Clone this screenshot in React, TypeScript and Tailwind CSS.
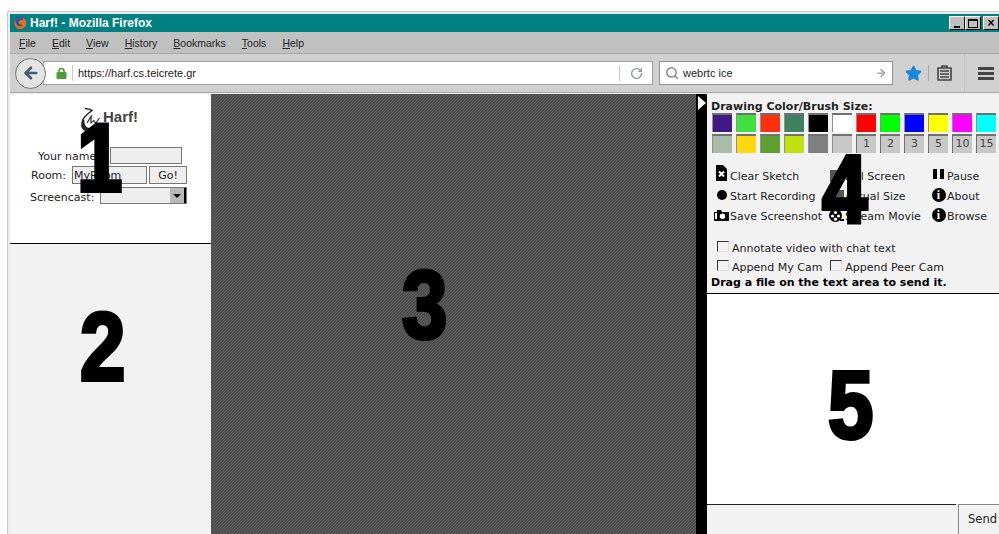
import { ArrowLeft, ArrowRight, RotateCw, Search, Star } from "lucide-react";

const DEJAVU = "font-['DejaVu_Sans',sans-serif]";

const MENU = ["File", "Edit", "View", "History", "Bookmarks", "Tools", "Help"];

const ROW_ONE = ["#3f1a85", "#40e040", "#ff3010", "#3f8060", "#000000", "#ffffff", "#ff0000", "#00ff00", "#0000ff", "#ffff00", "#ff00ff", "#00ffff"];
const ROW_TWO = ["#a8bca8", "#ffd810", "#60a030", "#c0e010", "#808080", "#c8c8c8"];
const BRUSHES = ["1", "2", "3", "5", "10", "15"];

function WinButton({ children }: { children: React.ReactNode }) {
  return (
    <div className="flex h-[14px] w-[16px] items-end justify-center border border-t-white border-l-white border-r-black border-b-black bg-[#c0c0c0]">
      {children}
    </div>
  );
}

function Swatch({ color }: { color: string }) {
  return (
    <div
      className="h-[19px] w-[20px] border-t-2 border-l border-t-[#707070] border-l-[#909090]"
      style={{ backgroundColor: color }}
    />
  );
}

function FoxLogo() {
  return (
    <svg width="14" height="14" viewBox="0 0 14 14">
      <circle cx="7" cy="7" r="6.5" fill="#2a5a9c" />
      <path d="M2 3C1 6 1 10 4 12.5 8 14.5 12.5 12 13.5 8 13.5 5 12 2.5 9.5 1.5 10.5 3 10 4 9 4.5 7 3.5 5 5 5.5 7 7 9 10 8 9.5 9.5 7 11.5 3 10 2.5 6Z" fill="#e8701a" />
    </svg>
  );
}

function HarfLogo() {
  return (
    <svg width="22" height="25" viewBox="0 0 22 25">
      <path d="M5 1.5c3 .2 5 .8 7 2-4 3-8 6-9.500 10" fill="none" stroke="#222" strokeWidth="1.500" />
      <path d="M2.500 12C.5 16 .5 21 4 23.500c5 2 11-.5 14.500-5-4 3-8 3.500-11 2C5 19 4 16 4.500 13Z" fill="#222" />
      <path d="M7 16c1.500-2 3-6 4.500-7-.5 3-1 5.500-.5 7 1-1 2-2.500 3-2.500 0 2 1 2.500 2.500 1.500l3-4" fill="none" stroke="#333" strokeWidth="1.200" />
    </svg>
  );
}

function ToolLabel({ icon, children }: { icon: React.ReactNode; children: string }) {
  return (
    <div className="flex h-[20px] items-center">
      <div className="flex w-[17px] shrink-0 justify-center">{icon}</div>
      <span className="whitespace-nowrap">{children}</span>
    </div>
  );
}

function InfoDot() {
  return (
    <div className="-mt-[5px] flex size-[14px] items-center justify-center rounded-full bg-black font-['Liberation_Serif',serif] text-[12px] leading-none font-bold text-white">
      i
    </div>
  );
}

function SketchIcon() {
  return (
    <svg width="11" height="16" viewBox="0 0 11 16" className="-mt-[8px]">
      <path d="M0 0h7l4 4v12H0Z" fill="#000" />
      <path d="M3 6.500l5 5M8 6.500l-5 5" stroke="#fff" strokeWidth="2" />
    </svg>
  );
}

function CameraIcon() {
  return (
    <svg width="15" height="11" viewBox="0 0 15 11" className="-mt-[3px]">
      <path d="M0 2h3V0h4l1 2h7v9H0Z" fill="#000" />
      <circle cx="8.500" cy="6.200" r="2.700" fill="#fff" />
      <rect x="1" y="3" width="2" height="6" fill="#fff" />
    </svg>
  );
}

function ReelIcon() {
  return (
    <svg width="15" height="14" viewBox="0 0 15 14" className="-mt-[3px]">
      <circle cx="6.500" cy="6.500" r="6.500" fill="#000" />
      <circle cx="6.500" cy="3.500" r="1.600" fill="#fff" />
      <circle cx="3.500" cy="7" r="1.600" fill="#fff" />
      <circle cx="9.500" cy="7" r="1.600" fill="#fff" />
      <circle cx="6.500" cy="10.200" r="1.600" fill="#fff" />
      <rect x="11" y="10" width="4" height="2" fill="#000" />
    </svg>
  );
}

function CheckLabel({ children }: { children: string }) {
  return (
    <label className="flex items-center gap-[3px] whitespace-nowrap">
      <span className="-mt-[6px] h-[11px] w-[12px] border border-t-[#333] border-l-[#333] border-r-[#ddd] border-b-[#ddd] bg-[#f2f2f2]" />
      <span>{children}</span>
    </label>
  );
}

function BigNumber({ className, children }: { className: string; children: string }) {
  return (
    <div className={`absolute scale-x-[0.85] font-['Liberation_Sans',sans-serif] text-[96px] leading-none font-bold text-black [-webkit-text-stroke:4px_black] ${className}`}>
      {children}
    </div>
  );
}

export default function App() {
  return (
    <div className="relative h-[534px] w-[999px] overflow-hidden bg-white pt-[11px] pl-[7px] font-['Liberation_Sans',sans-serif]">
      <div className="flex h-[523px] flex-col border-t border-l border-[#c8c8c8] bg-[#ececec] pt-[2px] pl-[2px]">
        {/* Window title bar */}
        <div className="flex h-[18px] shrink-0 items-center justify-between bg-[#008080] pl-[3px]">
          <div className="flex items-center gap-[3px] text-[12px] font-bold text-white">
            <FoxLogo />
            <span>Harf! - Mozilla Firefox</span>
          </div>
          <div className="flex items-center">
            <WinButton>
              <div className="mb-[1px] h-[2px] w-[6px] bg-black" />
            </WinButton>
            <WinButton>
              <div className="mb-[1px] h-[9px] w-[10px] border border-t-2 border-black" />
            </WinButton>
            <div className="ml-[2px]">
              <WinButton>
                <div className="text-[12px] leading-[12px] font-bold text-black">×</div>
              </WinButton>
            </div>
          </div>
        </div>

        {/* Menu bar */}
        <div className="flex h-[21px] shrink-0 items-center gap-[16px] bg-[#c0c0c0] pt-[2px] pl-[9px] text-[10.5px] text-[#222]">
          {MENU.map((item) => (
            <span key={item}>
              <span className="underline">{item[0]}</span>
              {item.slice(1)}
            </span>
          ))}
        </div>

        {/* Navigation bar */}
        <div className="flex h-[40px] shrink-0 items-center border-y border-y-[#a8a8a8] bg-[#d0d0d0] pl-[5px] text-[11px]">
          <div className="z-10 flex size-[31px] items-center justify-center rounded-full border border-[#777] bg-[#e4e4e4]">
            <ArrowLeft size={18} strokeWidth={3.5} className="text-[#4a5a72]" />
          </div>
          <div className="-ml-[3px] flex h-[24px] w-[610px] items-center border border-[#a0a0a0] bg-white">
            <svg width="11" height="12" viewBox="0 0 11 12" className="ml-[12px]">
              <path d="M3 6V4a2.500 2.500 0 0 1 5 0v2" fill="none" stroke="#48a038" strokeWidth="1.600" />
              <rect x="0.500" y="5" width="10" height="7" rx="1" fill="#48a038" />
            </svg>
            <div className="ml-[5px] h-[16px] w-px bg-[#ccc]" />
            <span className="ml-[5px] flex-1 text-[#222]">https://harf.cs.teicrete.gr</span>
            <div className="flex h-[16px] w-[33px] items-center justify-center border-l border-l-[#ccc]">
              <RotateCw size={13} strokeWidth={2.5} className="text-[#8a98a8]" />
            </div>
          </div>
          <div className="ml-[6px] flex h-[24px] w-[234px] items-center border border-[#909090] bg-white">
            <Search size={14} strokeWidth={2.5} className="ml-[5px] text-[#888]" />
            <span className="ml-[4px] flex-1 text-[#222]">webrtc ice</span>
            <ArrowRight size={12} strokeWidth={2.5} className="mr-[5px] text-[#999]" />
          </div>
          <Star size={17} className="ml-[12px] fill-[#1a88d8] text-[#1a88d8]" />
          <div className="ml-[6px] h-[16px] w-px bg-[#aaa]" />
          <svg width="15" height="16" viewBox="0 0 15 16" className="ml-[8px]">
            <path d="M1 3h13v12H1ZM5 3V1h5v2" fill="none" stroke="#444" strokeWidth="1.600" />
            <path d="M3 6h9M3 9h9M3 12h9" stroke="#444" strokeWidth="1.400" />
          </svg>
          <div className="ml-[12px] h-[38px] w-px bg-[#c0c0c0]" />
          <div className="ml-[13px] flex w-[16px] flex-col gap-[2px]">
            <div className="h-[3px] bg-[#444]" />
            <div className="h-[3px] bg-[#444]" />
            <div className="h-[3px] bg-[#444]" />
          </div>
        </div>

        {/* Page content */}
        <div className={`mt-[1px] flex min-h-0 flex-1 ${DEJAVU} text-[11px] text-[#222]`}>
          <div className="flex w-[201px] shrink-0 flex-col bg-[#f2f2f2]">
            <div className="flex h-[150px] flex-col border-b border-b-black bg-white">
              <div className="mt-[13px] ml-[70px] flex h-[25px] items-start">
                <HarfLogo />
                <span className="mt-[1px] ml-[1px] font-['Liberation_Sans',sans-serif] text-[15px] leading-[18px] font-bold text-[#444]">Harf!</span>
              </div>
              <div className="mt-[15px] flex h-[17px] items-center pl-[28px]">
                <span className="w-[72px] pt-[3px]">Your name:</span>
                <div className="h-[17px] w-[72px] border border-[#777] bg-[#eeeeee]" />
              </div>
              <div className="mt-[2px] flex h-[18px] items-center pl-[21px]">
                <span className="w-[41px] pt-[3px]">Room:</span>
                <div className="flex h-[18px] w-[75px] items-center border border-[#777] bg-[#eeeeee] pt-[2px] pl-[1px]">MyRoom</div>
                <div className="ml-[2px] flex h-[18px] w-[38px] items-center justify-center border border-[#777] bg-[#eeeeee] pt-[2px]">Go!</div>
              </div>
              <div className="mt-[3px] flex h-[17px] items-center pl-[20px]">
                <span className="w-[70px] pt-[5px]">Screencast:</span>
                <div className="flex h-[17px] w-[87px] justify-end border border-[#777] bg-[#eeeeee]">
                  <div className="flex w-[16px] items-center justify-center border-r-2 border-r-black bg-[#b8b8b8]">
                    <div className="size-0 border-x-[4px] border-t-[4px] border-x-transparent border-t-black" />
                  </div>
                </div>
              </div>
            </div>
          </div>

          <div className="w-[485px] shrink-0 bg-[repeating-linear-gradient(135deg,#4c4c4c_0,#4c4c4c_1.06px,#606060_1.06px,#606060_2.121px)]" />

          <div className="w-[11px] shrink-0 bg-black pt-[2px] pl-[2px]">
            <div className="h-0 w-0 border-y-[7px] border-l-[8px] border-y-transparent border-l-white" />
          </div>

          <div className="flex min-w-0 flex-1 flex-col bg-[#f2f2f2]">
            {/* Drawing tools */}
            <div className="h-[200px] shrink-0 border-b border-b-black pl-[5px]">
              <div className="mt-[6px] -ml-px leading-[13px] font-bold whitespace-nowrap">Drawing Color/Brush Size:</div>
              <div className="flex gap-[4px]">
                {ROW_ONE.map((c) => (
                  <Swatch key={c} color={c} />
                ))}
              </div>
              <div className="mt-[2px] flex gap-[4px]">
                {ROW_TWO.map((c) => (
                  <Swatch key={c} color={c} />
                ))}
                {BRUSHES.map((b) => (
                  <div key={b} className="flex h-[19px] w-[20px] items-center justify-center border-t-2 border-l border-t-[#707070] border-l-[#707070] bg-[#c8c8c8] text-[#444]">
                    {b}
                  </div>
                ))}
              </div>

              <div className="mt-[14px] grid grid-cols-[115px_102px_1fr] pl-[1px]">
                <ToolLabel icon={<SketchIcon />}>Clear Sketch</ToolLabel>
                <ToolLabel icon={<div className="-mt-[3px] h-[12px] w-[14px] bg-[#555]" />}>Full Screen</ToolLabel>
                <ToolLabel icon={<div className="-mt-[7px] flex gap-[3px]"><div className="h-[10px] w-[4px] bg-black" /><div className="h-[10px] w-[4px] bg-black" /></div>}>Pause</ToolLabel>
                <ToolLabel icon={<div className="-mt-[5px] size-[10px] rounded-full bg-black" />}>Start Recording</ToolLabel>
                <ToolLabel icon={<div className="-mt-[3px] h-[12px] w-[14px] bg-[#555]" />}>Actual Size</ToolLabel>
                <ToolLabel icon={<InfoDot />}>About</ToolLabel>
                <ToolLabel icon={<CameraIcon />}>Save Screenshot</ToolLabel>
                <ToolLabel icon={<ReelIcon />}>Stream Movie</ToolLabel>
                <ToolLabel icon={<InfoDot />}>Browse</ToolLabel>
              </div>

              <div className="mt-[15px] flex h-[14px] items-center pl-[5px]">
                <CheckLabel>Annotate video with chat text</CheckLabel>
              </div>
              <div className="mt-[5px] flex h-[14px] items-center gap-[8px] pl-[5px]">
                <CheckLabel>Append My Cam</CheckLabel>
                <CheckLabel>Append Peer Cam</CheckLabel>
              </div>
              <div className="mt-[1px] -ml-px leading-[14px] font-bold whitespace-nowrap text-black">Drag a file on the text area to send it.</div>
            </div>

            {/* Chat log */}
            <div className="h-[210px] shrink-0 bg-white" />

            {/* Chat input */}
            <div className="flex min-h-0 flex-1">
              <div className="w-[249px] border-t border-t-[#222]" />
              <div className="ml-[2px] flex flex-1 items-center border-t border-l border-[#888] pl-[9px] text-[11.5px]">Send</div>
            </div>
          </div>
        </div>
      </div>

      <BigNumber className="top-[110px] left-[73px]">1</BigNumber>
      <BigNumber className="top-[299px] left-[76px]">2</BigNumber>
      <BigNumber className="top-[257px] left-[398px]">3</BigNumber>
      <BigNumber className="top-[142px] left-[818px]">4</BigNumber>
      <BigNumber className="top-[357px] left-[824px]">5</BigNumber>
    </div>
  );
}
